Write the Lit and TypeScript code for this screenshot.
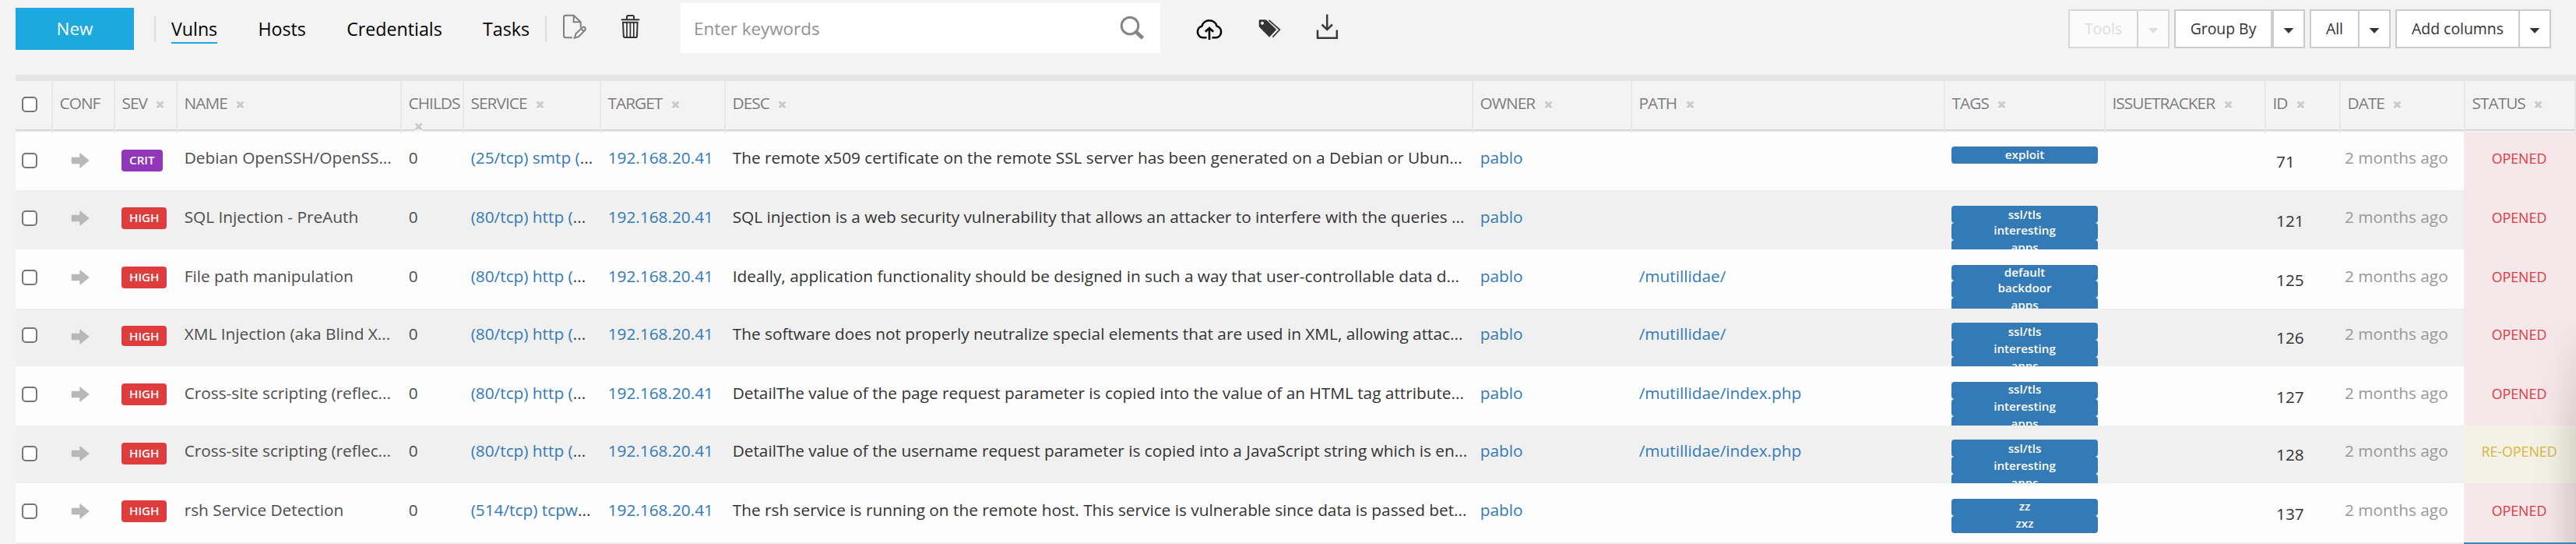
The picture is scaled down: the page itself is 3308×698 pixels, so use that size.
import { LitElement, html, css } from "lit";
import { customElement } from "lit/decorators.js";
import { classMap } from "lit/directives/class-map.js";

interface Row {
  sev: string; name: string; service: string; desc: string; path?: string;
  tags: string[]; id: number; status?: string; mods?: string;
}

const COLUMNS = ["", "CONF", "SEV", "NAME", "CHILDS", "SERVICE", "TARGET", "DESC", "OWNER", "PATH", "TAGS", "ISSUETRACKER", "ID", "DATE", "STATUS"];

const ROWS: Row[] = [
  { sev: "CRIT", name: "Debian OpenSSH/OpenSS...", service: "(25/tcp) smtp (", desc: "The remote x509 certificate on the remote SSL server has been generated on a Debian or Ubun...", tags: ["exploit"], id: 71, mods: "short" },
  { sev: "HIGH", name: "SQL Injection - PreAuth", service: "(80/tcp) http (", desc: "SQL injection is a web security vulnerability that allows an attacker to interfere with the queries ...", tags: ["ssl/tls", "interesting", "apps"], id: 121, mods: "lowtag" },
  { sev: "HIGH", name: "File path manipulation", service: "(80/tcp) http (", desc: "Ideally, application functionality should be designed in such a way that user-controllable data d...", path: "/mutillidae/", tags: ["default", "backdoor", "apps"], id: 125, mods: "tight" },
  { sev: "HIGH", name: "XML Injection (aka Blind X...", service: "(80/tcp) http (", desc: "The software does not properly neutralize special elements that are used in XML, allowing attac...", path: "/mutillidae/", tags: ["ssl/tls", "interesting", "apps"], id: 126, mods: "short lowtags slim" },
  { sev: "HIGH", name: "Cross-site scripting (reflec...", service: "(80/tcp) http (", desc: "DetailThe value of the page request parameter is copied into the value of an HTML tag attribute...", path: "/mutillidae/index.php", tags: ["ssl/tls", "interesting", "apps"], id: 127 },
  { sev: "HIGH", name: "Cross-site scripting (reflec...", service: "(80/tcp) http (", desc: "DetailThe value of the username request parameter is copied into a JavaScript string which is en...", path: "/mutillidae/index.php", tags: ["ssl/tls", "interesting", "apps"], id: 128, status: "RE-OPENED", mods: "short lowtags" },
  { sev: "HIGH", name: "rsh Service Detection", service: "(514/tcp) tcpw", desc: "The rsh service is running on the remote host. This service is vulnerable since data is passed bet...", tags: ["zz", "zxz"], id: 137 },
];

const cross = html`<svg class="cross" viewBox="0 0 11 11"><path d="M1.6 1.600 L9.4 9.4 M9.4 1.600 L1.6 9.4" stroke="currentColor" stroke-width="3.4" fill="none"/></svg>`;

@customElement("app-root")
export class AppRoot extends LitElement {
  static styles = css`
    :host { display: block; position: relative; width: 3308px; height: 698px; overflow: hidden; background: #f3f3f3; font-family: "Open Sans", "Noto Sans", sans-serif; font-size: 20.8px; color: #333; }
    * { box-sizing: border-box; }
    .toolbar { display: flex; height: 96px; padding-left: 20px; align-items: flex-start; }
    .new { width: 152px; height: 54px; margin-top: 10px; background: #1da8df; color: #fff; text-align: center; font-size: 22.4px; font-weight: 500; line-height: 54px; }
    .sep { width: 2px; height: 34px; margin-top: 20px; background: #dcdcdc; }
    .sep.a { margin-left: 26px; }
    .sep.b { margin-left: 20px; }
    .tabs { display: flex; margin-left: 20px; width: 460px; justify-content: space-between; color: #000; font-weight: 500; font-size: 23.2px; }
    .tab { margin-top: 20px; height: 36px; line-height: 34px; white-space: nowrap; }
    .tab.on { border-bottom: 2px solid #1da8df; }
    .icon { display: block; flex: none; }
    .edit { margin: 18px 0 0 20px; }
    .trash { margin: 18px 0 0 43px; }
    .search { display: flex; justify-content: space-between; width: 616px; height: 64px; margin: 4px 0 0 52px; padding: 0 20px 0 17px; background: #fff; color: #929292; line-height: 66px; font-size: 22.4px; }
    .mag { margin-top: 15px; }
    .cloud { margin: 23px 0 0 44px; }
    .tagicon { margin: 24px 0 0 44px; }
    .down { margin: 17px 0 0 44px; }
    .buttons { display: flex; gap: 6px; margin: 12px 32px 0 auto; }
    .split { display: flex; height: 50px; border: 2px solid #ccc; background: #fff; line-height: 46px; font-size: 19.4px; }
    .split.off { color: #ddd; border-color: #d8d8d8; background: #fbfbfb; }
    .split.off .label { border-color: #d0d0d0; }
    .label { text-align: center; border-right: 2px solid #ccc; white-space: nowrap; }
    .tools { width: 88px; } .group { width: 126px; border-right-width: 4px; } .all { width: 62px; } .add { width: 158px; }
    .caret { display: grid; place-items: center; width: 38px; padding-top: 4px; }
    .head, .row { display: grid; grid-template-columns: 48px 80px 80px 288px 80px 176px 160px 960px 204px 402px 206px 206px 96px 160px 142px; margin-left: 20px; }
    .row { grid-template-columns: 48px 80px 80px 288px 80px 176px 160px 960px 204px 402px 206px 206px 96px 158px 144px; }
    .head { height: 74px; border-top: 8px solid #e4e4e4; }
    .th { height: 66px; border-right: 2px solid #e7e7e7; padding: 14px 0 0 8.5px; color: #7b7b7b; line-height: 28px; letter-spacing: -.95px; text-shadow: 0 2px 0 #fff; background: linear-gradient(#d6d6d6, #d6d6d6) 0 62px / 100% 2px no-repeat; }
    .th.box { padding: 20px 0 0 8px; }
    .cross { width: 11px; height: 11px; margin-left: 7px; color: #ccc; filter: drop-shadow(0 2px 0 #fff); }
    .check { display: block; width: 20px; height: 20px; border: 2px solid #767676; border-radius: 5px; background: #fff; }
    .row { height: 76px; background: #fdfdfd; overflow: hidden; --s: 0px; --l: 18px; --f: 18px; }
    .row.alt { background: #f0f0f0; }
    .row.short { height: 74px; --s: -2px; --l: 22px; --f: 20px; }
    .row.lowtag { --f: 22px; }
    .row.lowtags { --f: 22px; }
    .td { padding: calc(18px + var(--s)) 0 0 8.7px; line-height: 32px; white-space: nowrap; height: 76px; }
    .link { color: #337ab7; }
    .name { color: #4d4d4d; }
    .td.ck { padding: 26px 0 0 8px; }
    .slim .td.ck { padding-top: 24px; }
    .td.cf { padding: 26px 0 0 23px; }
    .td.sv { padding: 22px 0 0 8px; }
    .sev { display: inline-block; vertical-align: top; height: 28px; line-height: 26px; padding: 0 10px; border-radius: 4px; background: #df3d3d; color: #fff; font-size: 15.2px; font-weight: 600; }
    .slim .sev { height: 26px; }
    .sev.crit { background: #9135bb; }
    .td.tg { padding: calc(20px + var(--s)) 0 0 8px; }
    .tag { width: 188px; height: 22px; border-radius: 4px; background: #337ab7; color: #fff; text-align: center; font-size: 15.2px; font-weight: 600; line-height: var(--l); }
    .tag:first-child { line-height: var(--f); }
    .tight .tag:first-child { height: 20px; }
    .td.id { padding-top: calc(23px + var(--s)); padding-left: 13px; }
    .td.dt { padding-left: 5px; color: #999; }
    .td.st { padding: calc(19px + var(--s)) 2px 0 0; text-align: center; font-size: 17.8px; color: #e0393e; background: #f5e7ea; }
    .td.st.re { color: #d9b43c; background: #f4f2e6; }
    .next { display: flex; margin-left: 20px; height: 2px; background: #ececec; justify-content: flex-end; }
    .blue { width: 144px; background: #2a8fb8; }
    .shade { position: absolute; right: 0; top: 400px; width: 60px; height: 296px; background: linear-gradient(to right, transparent, rgba(0,0,0,.025) 50%, rgba(0,0,0,.11)); -webkit-mask-image: linear-gradient(transparent, #000 55%); mask-image: linear-gradient(transparent, #000 55%); }
  `;

  render() {
    const split = (text: string, cls: string, off = false) => html`
      <div class=${classMap({ split: true, off })}>
        <div class="label ${cls}">${text}</div>
        <div class="caret"><svg class="icon" width="14" height="7" viewBox="0 0 14 7"><path d="M1 0h12L7 6.500z" fill="currentColor" stroke="currentColor" stroke-linejoin="round" stroke-width=".6"/></svg></div>
      </div>`;
    return html`
      <div class="toolbar">
        <div class="new">New</div>
        <div class="sep a"></div>
        <div class="tabs"><div class="tab on">Vulns</div><div class="tab">Hosts</div><div class="tab">Credentials</div><div class="tab">Tasks</div></div>
        <div class="sep b"></div>
        <svg class="icon edit" width="32" height="34" viewBox="0 0 32 34" fill="none" stroke="#808080" stroke-width="2"><path d="M13 30.300H4.500Q2 30.300 2 27.800V4.200Q2 1.700 4.500 1.700H14.700L23.700 10.300V17.500M14.700 1.700V10.300H23.700"/><path d="M15.800 30.800L17.500 25.300L25.800 17.200Q27.500 15.800 29.200 17.300Q30.600 19 29.200 20.800L21 29.200ZM24.300 18.800L27.500 22"/></svg>
        <svg class="icon trash" width="25" height="33" viewBox="0 0 25 33" fill="none" stroke="#333" stroke-width="2"><path d="M.8 7.200H24.200M8 7V3.500Q8 2 9.500 2H15.500Q17 2 17 3.500V7M3 10.700H21.600L21 28.500Q21 30 19.500 30H5.500Q4 30 3.800 28.500Z"/><path d="M8 11V30M12.400 11V30M16.800 11V30" stroke-width="1.700"/></svg>
        <div class="search"><span>Enter keywords</span><svg class="icon mag" width="32" height="34" viewBox="0 0 32 34" fill="none" stroke="#858585"><circle cx="13" cy="14" r="10.800" stroke-width="3"/><path d="M21 22L29.500 30" stroke-width="5"/></svg></div>
        <svg class="icon cloud" width="38" height="30" viewBox="0 0 38 30" fill="none" stroke="#000" stroke-width="2.600"><path d="M15.500 25.300H10.200A7.600 7.600 0 0 1 9.400 10.500A10 10 0 0 1 28.600 10.500A7.600 7.600 0 0 1 27.800 25.300H22.500M19 28V13M13.800 17.800L19 13L24.200 17.800"/></svg>
        <svg class="icon tagicon" width="30" height="26" viewBox="0 0 30 26"><path fill="#333" fill-rule="evenodd" d="M.7 2.300Q.7 1.300 1.700 1.300H8.800Q10 1.300 11 2.200L23.200 14L14 23.700L1.500 11Q.7 10 .7 9ZM5 3.700a2 2 0 1 0 .01 0Z"/><path d="M13.500 1.800L27.300 14L18.200 23.600" fill="none" stroke="#333" stroke-width="1.700"/></svg>
        <svg class="icon down" width="29" height="34" viewBox="0 0 29 34" fill="none" stroke="#3a3a3a" stroke-width="2.500"><path d="M14.200 1.500V21M7.500 14.500L14.200 21L21 14.500M2 21.500V31.800H26.800V21.500"/></svg>
        <div class="buttons">${split("Tools", "tools", true)}${split("Group By", "group")}${split("All", "all")}${split("Add columns", "add")}</div>
      </div>
      <div class="head">${COLUMNS.map((c, i) => html`<div class=${classMap({ th: true, box: i === 0 })}>${i === 0 ? html`<span class="check"></span>` : html`${c} ${i > 1 ? cross : ""}`}</div>`)}</div>
      ${ROWS.map((r, i) => html`
        <div class="row ${i % 2 ? "alt" : ""} ${r.mods ?? ""}">
          <div class="td ck"><span class="check"></span></div>
          <div class="td cf"><svg class="icon" width="24" height="20" viewBox="0 0 24 20"><path d="M1.500 6.500H12V1.200L22.800 10L12 18.800V13.500H1.500Z" fill="#b8b8b8" stroke="#b8b8b8" stroke-width="1.400" stroke-linejoin="round"/></svg></div>
          <div class="td sv"><span class=${classMap({ sev: true, crit: r.sev === "CRIT" })}>${r.sev}</span></div>
          <div class="td name">${r.name}</div>
          <div class="td name">0</div>
          <div class="td"><span class="link">${r.service}</span>...</div>
          <div class="td link">192.168.20.41</div>
          <div class="td">${r.desc}</div>
          <div class="td link">pablo</div>
          <div class="td link">${r.path ?? ""}</div>
          <div class="td tg">${r.tags.map((t) => html`<div class="tag">${t}</div>`)}</div>
          <div class="td"></div>
          <div class="td id">${r.id}</div>
          <div class="td dt">2 months ago</div>
          <div class=${classMap({ td: true, st: true, re: !!r.status })}>${r.status ?? "OPENED"}</div>
        </div>`)}
      <div class="next"><div class="blue"></div></div>
      <div class="shade"></div>`;
  }
}
